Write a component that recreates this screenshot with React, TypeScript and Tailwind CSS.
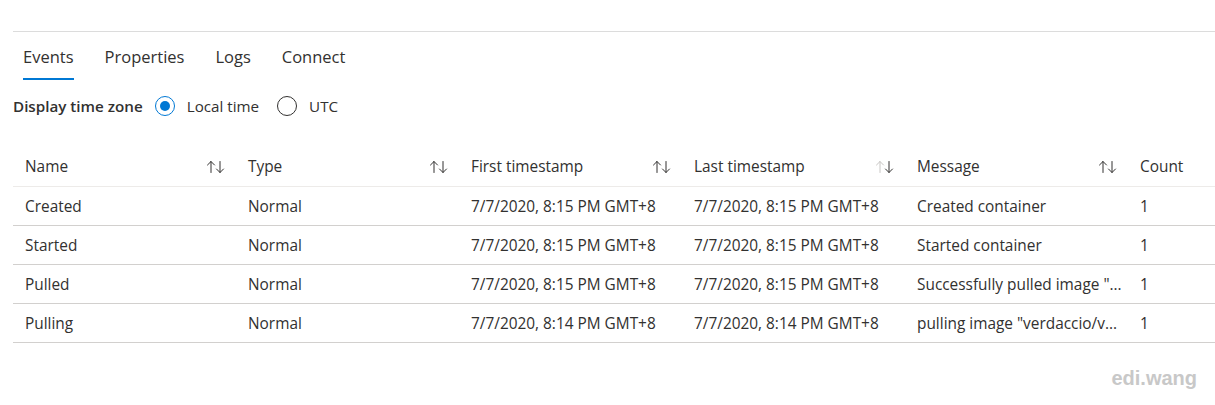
import React from "react";

const cols = ["Name", "Type", "First timestamp", "Last timestamp", "Message", "Count"];
const rows = [
  ["Created", "Normal", "7/7/2020, 8:15 PM GMT+8", "7/7/2020, 8:15 PM GMT+8", "Created container", "1"],
  ["Started", "Normal", "7/7/2020, 8:15 PM GMT+8", "7/7/2020, 8:15 PM GMT+8", "Started container", "1"],
  ["Pulled", "Normal", "7/7/2020, 8:15 PM GMT+8", "7/7/2020, 8:15 PM GMT+8", "Successfully pulled image \"...", "1"],
  ["Pulling", "Normal", "7/7/2020, 8:14 PM GMT+8", "7/7/2020, 8:14 PM GMT+8", "pulling image \"verdaccio/v...", "1"],
];

function SortIcon({ upLight }: { upLight?: boolean }) {
  return (
    <svg width="20" height="16" viewBox="0 0 20 16" fill="none" strokeWidth="1" strokeLinecap="round">
      <g stroke={upLight ? "#c8c6c4" : "#323130"}>
        <path d="M5 2.5V13.5" />
        <path d="M1.5 6L5 2.5L8.5 6" />
      </g>
      <g stroke="#323130">
        <path d="M14 2.5V13.5" />
        <path d="M10.5 10L14 13.5L17.5 10" />
      </g>
    </svg>
  );
}

export default function App() {
  return (
    <div className="w-[1215px] h-[405px] bg-white text-[#323130] relative" style={{ fontFamily: '"Segoe UI", "Open Sans", "Noto Sans", sans-serif' }}>
      <div className="pl-[13px] pt-[31px]">
        <div className="border-t border-[#dcdcdc]" />
        <div className="flex gap-[31px] pl-[10px] h-[46px] text-[16.5px]">
          {["Events", "Properties", "Logs", "Connect"].map((t, i) => (
            <div key={t} className="relative flex items-center pt-[4px]">
              <span>{t}</span>
              {i === 0 && <div className="absolute left-0 right-0 bottom-[-2px] h-[2px] bg-[#0078d4]" />}
            </div>
          ))}
        </div>
        <div className="flex items-center h-[52px] pt-[4px] text-[15.2px]">
          <span className="font-semibold mr-[12px]">Display time zone</span>
          <div className="flex items-center mr-[18px]">
            <div className="w-[20px] h-[20px] rounded-full border border-[#0078d4] flex items-center justify-center mr-[12px]">
              <div className="w-[10px] h-[10px] rounded-full bg-[#0078d4]" />
            </div>
            <span>Local time</span>
          </div>
          <div className="flex items-center">
            <div className="w-[20px] h-[20px] rounded-full border border-[#323130] mr-[12px]" />
            <span>UTC</span>
          </div>
        </div>
        <div className="mt-[18px] text-[15.4px]">
          <div className="grid grid-cols-[223px_223px_223px_223px_223px_1fr] h-[39px] border-b border-[#edebe9]">
            {cols.map((c, i) => (
              <div key={c} className="flex items-center justify-between pl-[12px] pr-[10px] font-medium">
                <span>{c}</span>
                {i < 5 && <SortIcon upLight={i === 3} />}
              </div>
            ))}
          </div>
          {rows.map((r, ri) => (
            <div key={ri} className="grid grid-cols-[223px_223px_223px_223px_223px_1fr] h-[39px] border-b border-[#d2d0ce]">
              {r.map((v, i) => (
                <div key={i} className="flex items-center pl-[12px] pt-[1px] min-w-0">
                  <span className="whitespace-nowrap">{v}</span>
                </div>
              ))}
            </div>
          ))}
        </div>
      </div>
      <div className="absolute right-[18px] top-[363px] text-[20px] font-bold text-[#c8c8c8]" style={{ fontFamily: '"Liberation Sans", Arial, sans-serif' }}>edi.wang</div>
    </div>
  );
}
